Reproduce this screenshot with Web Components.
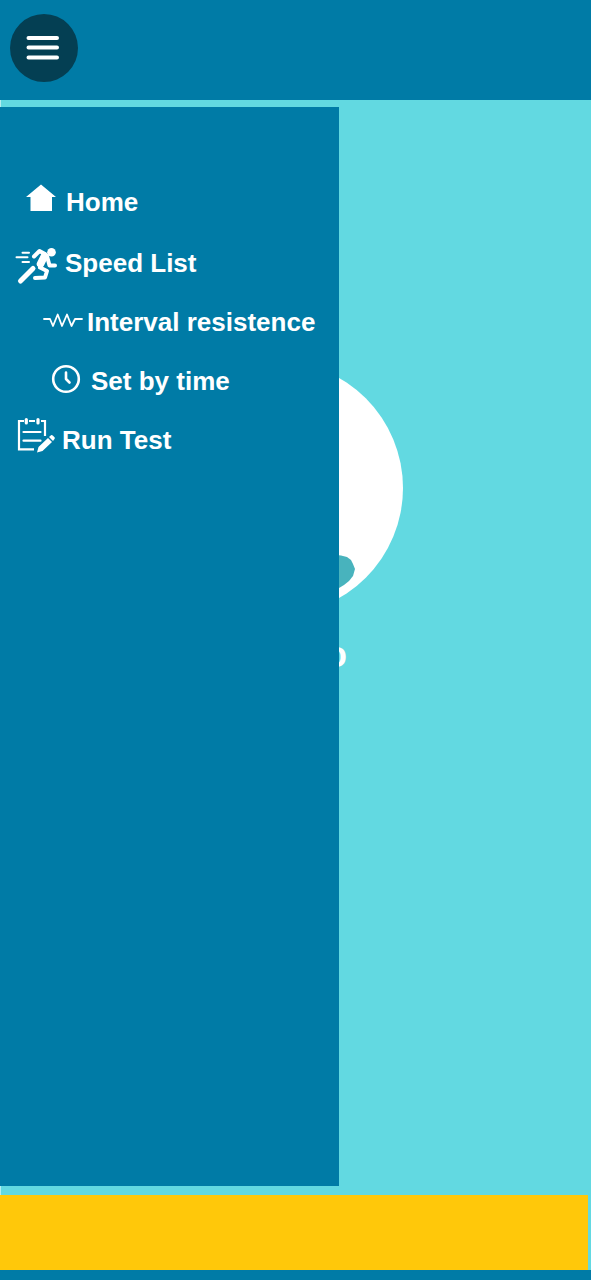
<!DOCTYPE html>
<html lang="en">
<head>
<meta charset="utf-8">
<meta name="viewport" content="width=device-width, initial-scale=1">
<title>Speed List</title>
<style>
  body { margin: 0; font-family: "Arial Rounded MT Bold", "Liberation Sans", Arial, sans-serif; }
</style>
</head>
<body>
<run-app></run-app>

<script>
const define = (name, html, setup) => {
  const template = document.createElement("template");
  template.innerHTML = html;
  customElements.define(name, class extends HTMLElement {
    constructor() {
      super();
      this.attachShadow({ mode: "open" }).append(template.content.cloneNode(true));
    }
    connectedCallback() { if (setup) setup(this, this.shadowRoot); }
  });
};

define("top-bar", `
  <style>
    :host { display: flex; height: 86px; padding: 14px 10px 0; background: #007ba6; }
    button { width: 68px; height: 68px; padding: 0; border: 0; border-radius: 50%; background: #043f53; cursor: pointer; }
    svg { display: block; }
  </style>
  <button type="button" aria-label="Menu" aria-expanded="true">
    <svg width="68" height="68" fill="none" stroke="#fff" stroke-width="4" stroke-linecap="round">
      <path d="M18.5 24H47M18.5 33.5H47M18.5 43.5H47"/>
    </svg>
  </button>
`, (host, root) => {
  const button = root.querySelector("button");
  button.onclick = () => {
    const open = button.getAttribute("aria-expanded") !== "true";
    button.setAttribute("aria-expanded", open);
    host.dispatchEvent(new CustomEvent("menu-toggle", { detail: open }));
  };
});

const icons = {
  home: [30, `<path fill="#fff" d="M15 4.500 30 17H26V31H4.500V17H0Z"/>`],
  runner: [42, `<g fill="none" stroke="#fff" stroke-linecap="round" stroke-linejoin="round">
      <path stroke-width="2" d="M7.5 11.7H14M1.5 16.3H12.500M7.5 21H14"/>
      <path stroke-width="4" d="M19 15.5 24.500 10 30 13M32 15 34.500 24.500H40M25 26.500 32 30 30 36.500 20 37"/>
      <path stroke-width="7.500" d="M29.500 15 25.500 23"/>
      <path stroke-width="5" d="M5.500 40 18 27.500"/>
    </g><circle cx="36.500" cy="11.300" r="4.300" fill="#fff"/>`],
  wave: [40, `<path fill="none" stroke="#fff" stroke-width="1.800" stroke-linejoin="round" stroke-linecap="round" d="M1 19H7L10 26 14.700 14.500 19 26 24 14.500 28.500 26 32 19H39"/>`],
  clock: [30, `<g fill="none" stroke="#fff" stroke-linecap="round" stroke-linejoin="round">
      <circle cx="15" cy="20" r="12.800" stroke-width="2.600"/><path stroke-width="2.600" d="M15 13.5V20L18.500 23.500"/></g>`],
  notes: [39, `<g transform="translate(2)"><g fill="none" stroke="#fff" stroke-width="2.200">
      <path d="M7 3H2V31.3H17M12 3H18M24 3H28V18"/>
      <path stroke-linecap="round" d="M6.5 14H23.5M6.5 22.7H23.500"/>
      <path stroke-width="3.200" stroke-linecap="round" d="M9.3 1.5V5M21 1.500V5"/></g>
      <path fill="#fff" d="M20 34.5 21.5 29 31 20 35 24 25.5 33ZM32 19 34 17.2Q35 16.7 36 17.7L37.5 19.2Q38.3 20 37.5 21L36 23Z"/></g>`]
};

define("menu-item", `
  <style>
    :host { display: block; }
    a { display: flex; align-items: center; height: 59px; color: #fff; font-size: 26px; line-height: 30px; font-weight: 700; text-decoration: none; white-space: nowrap; }
    svg { flex: none; overflow: visible; }
  </style>
  <a href="#"><svg height="44" aria-hidden="true"></svg><slot></slot></a>
`, (host, root) => {
  const [width, shape] = icons[host.getAttribute("icon")];
  const svg = root.querySelector("svg");
  svg.setAttribute("width", width);
  svg.innerHTML = shape;
});

define("side-menu", `
  <style>
    :host { display: block; box-sizing: border-box; width: 339px; max-width: 85%; padding-top: 65px; background: #007ba6; }
    :host([hidden]) { display: none; }
    nav { display: flex; flex-direction: column; }
    menu-item { padding-left: 15px; }
    .home { padding: 0 0 2px 26px; }
    .sub { padding-left: 43px; }
    .time { padding-left: 51px; }
    .text { padding-left: 8px; }
    .home .text, .time .text { padding-left: 10px; }
    .sub .text { padding-left: 4px; }
  </style>
  <nav aria-label="Main">
    <menu-item class="home" icon="home"><span class="text">Home</span></menu-item>
    <menu-item icon="runner"><span class="text">Speed List</span></menu-item>
    <menu-item class="sub" icon="wave"><span class="text">Interval resistence</span></menu-item>
    <menu-item class="time" icon="clock"><span class="text">Set by time</span></menu-item>
    <menu-item icon="notes"><span class="text">Run Test</span></menu-item>
  </nav>
`);

define("brand-logo", `
  <style>
    :host { display: block; width: 254px; }
    svg { display: block; }
    div { padding: 20px 56px 0 0; color: #fff; font-size: 36px; line-height: 40px; font-weight: 700; text-align: right; }
  </style>
  <svg width="254" height="254" aria-hidden="true">
    <circle cx="127" cy="127" r="127" fill="#fff"/>
    <path fill="#48b3bd" d="M180 196Q186 193 192 194.500L198 196 202 199 204 203 206 208 204 215 200 220 195 224 190 227 183 229 174 222 172 206Z"/>
  </svg>
  <div><slot></slot></div>
`);

define("run-app", `
  <style>
    :host { display: flex; flex-direction: column; min-height: 100vh; background: #62d9e1; }
    main { position: relative; flex: 1; display: flex; justify-content: center; box-sizing: border-box; min-height: 500px; padding: 261px 40px 0 0; border-left: 1px solid #b4eef0; }
    side-menu { position: absolute; top: 7px; bottom: 9px; left: -1px; }
    footer { height: 75px; border-bottom: 10px solid #007ba6; background: linear-gradient(#ffc80a, #ffc80a) left / calc(100% - 3px) 100% no-repeat; }
  </style>
  <top-bar></top-bar>
  <main>
    <brand-logo>o</brand-logo>
    <side-menu></side-menu>
  </main>
  <footer></footer>
`, (host, root) => {
  root.querySelector("top-bar").addEventListener("menu-toggle", event => {
    root.querySelector("side-menu").hidden = !event.detail;
  });
});
</script>
</body>
</html>
